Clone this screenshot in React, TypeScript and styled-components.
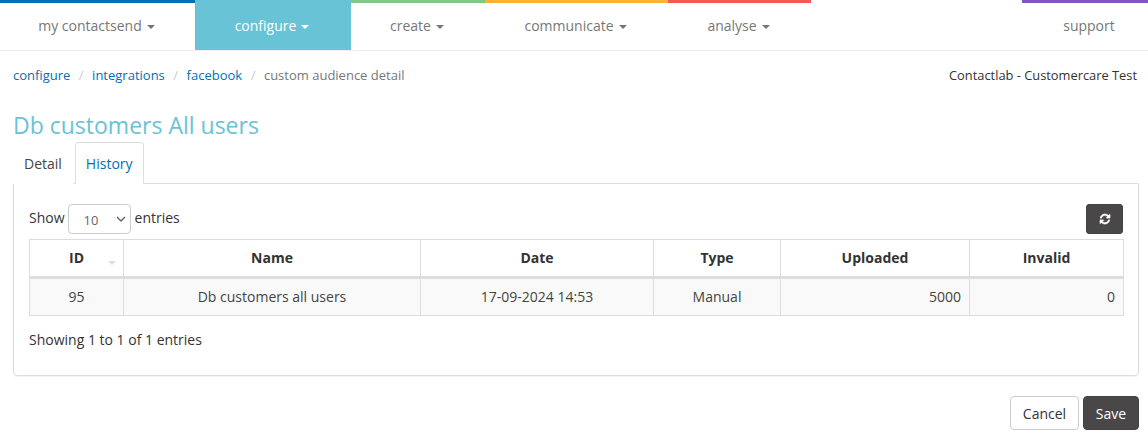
import React from 'react'
import styled, { createGlobalStyle } from 'styled-components'

const GlobalStyle = createGlobalStyle`
    html, body {
        margin: 0;
        padding: 0;
        background: #fff;
        font-family: "Open Sans", "Liberation Sans", sans-serif;
        font-size: 14px;
        color: #333;
    }
    * {
        box-sizing: border-box;
    }
`

const NavBar = styled.nav`
    display: flex;
    height: 51px;
    border-bottom: 1px solid #eee;
`

const NavItem = styled.a<{ $width: number; $accent?: string; $active?: boolean }>`
    flex: 0 0 ${(p) => p.$width}px;
    display: flex;
    align-items: center;
    justify-content: center;
    gap: 5px;
    height: 50px;
    padding: 0 2px 3px 0;
    border-top: 3px solid ${(p) => (p.$active ? '#69c3d6' : p.$accent || 'transparent')};
    background: ${(p) => (p.$active ? '#69c3d6' : 'transparent')};
    color: ${(p) => (p.$active ? '#fff' : '#777')};
    font-size: 14px;
`

const SupportItem = styled(NavItem)`
    padding-left: 10px;
`

const NavSpacer = styled.div`
    flex: 1;
`

const Caret = styled.span`
    width: 0;
    height: 0;
    margin-top: 3px;
    border-top: 4px solid currentColor;
    border-left: 4px solid transparent;
    border-right: 4px solid transparent;
`

const Content = styled.main`
    padding: 0 9px 0 13px;
`

const TopRow = styled.div`
    display: flex;
    justify-content: space-between;
    align-items: center;
    height: 48px;
    font-size: 13px;
    padding-right: 2px;
`

const Breadcrumb = styled.div`
    display: flex;
    gap: 8px;
    color: #777;
`

const Crumb = styled.a`
    color: #0070b9;
`

const Slash = styled.span`
    color: #ccc;
    padding: 0 0.5px;
`

const Account = styled.div`
    color: #333;
    font-size: 12.85px;
`

const Title = styled.h1`
    margin: 11px 0 0;
    height: 31px;
    line-height: 31px;
    font-size: 23px;
    font-weight: 400;
    color: #69c3d6;
`

const Tabs = styled.div`
    display: flex;
    margin-top: 1px;
    height: 42px;
`

const Tab = styled.a<{ $active?: boolean }>`
    display: flex;
    align-items: center;
    padding: 0 10px;
    margin-right: ${(p) => (p.$active ? '0' : '2px')};
    height: 42px;
    font-size: 14px;
    color: ${(p) => (p.$active ? '#0070b9' : '#444')};
    background: #fff;
    border: 1px solid ${(p) => (p.$active ? '#ddd' : 'transparent')};
    border-bottom-color: ${(p) => (p.$active ? '#fff' : 'transparent')};
    border-radius: 4px 4px 0 0;
    position: relative;
    z-index: 1;
`

const Panel = styled.section`
    margin-top: -1px;
    height: 193px;
    border: 1px solid #ddd;
    border-radius: 0 0 4px 4px;
    box-shadow: 0 1px 1px rgba(0, 0, 0, 0.05);
    padding: 20px 15px 0;
`

const TableTools = styled.div`
    display: flex;
    justify-content: space-between;
    align-items: center;
    height: 30px;
    margin-bottom: 5px;
`

const LengthLabel = styled.label`
    display: flex;
    align-items: flex-start;
    height: 30px;
    line-height: 28px;
    color: #333;
    font-size: 14px;
`

const LengthSelect = styled.select`
    width: 63px;
    height: 30px;
    margin: 0 4px 0 3px;
    padding: 1px 10px 0 15px;
    appearance: none;
    font-family: inherit;
    font-size: 13px;
    color: #666;
    background: #fff url("data:image/svg+xml,%3Csvg xmlns='http://www.w3.org/2000/svg' width='10' height='6'%3E%3Cpath d='M1 1l4 4 4-4' fill='none' stroke='%23666' stroke-width='1.4'/%3E%3C/svg%3E") no-repeat right 4px center;
    border: 1px solid #ccc;
    border-radius: 4px;
`

const DarkButton = styled.button`
    display: flex;
    align-items: center;
    justify-content: center;
    background: #4a4748;
    color: #fff;
    border: 1px solid #454243;
    border-radius: 3px;
    font-family: inherit;
`

const RefreshButton = styled(DarkButton)`
    width: 37px;
    height: 30px;
    padding: 0;
`

const DataTable = styled.table`
    width: 100%;
    table-layout: fixed;
    border-collapse: collapse;
    font-size: 14px;
`

const HeadCell = styled.th`
    position: relative;
    height: 38px;
    padding: 0 8px 2px;
    text-align: center;
    font-weight: 700;
    color: #333;
    border: 1px solid #ddd;
    border-bottom: 3px solid #ddd;
`

const SortMark = styled.span`
    position: absolute;
    right: 7px;
    top: 21px;
    width: 0;
    height: 0;
    border-top: 4px solid #ddd;
    border-left: 4px solid transparent;
    border-right: 4px solid transparent;
`

const BodyCell = styled.td<{ $align?: string }>`
    height: 38px;
    padding: 0 8px 1px;
    background: #f9f9f9;
    color: #444;
    text-align: ${(p) => p.$align || 'center'};
    border: 1px solid #ddd;
`

const TableInfo = styled.div`
    margin-top: 14px;
    line-height: 20px;
    color: #333;
`

const Footer = styled.div`
    display: flex;
    justify-content: flex-end;
    gap: 4px;
    margin-top: 20px;
`

const CancelButton = styled.button`
    width: 69px;
    height: 34px;
    padding: 0;
    background: #fff;
    color: #333;
    border: 1px solid #ccc;
    border-radius: 4px;
    font-family: inherit;
    font-size: 14px;
`

const SaveButton = styled(DarkButton)`
    width: 56px;
    height: 34px;
    padding: 0;
    border-radius: 4px;
    font-size: 14px;
`

const RefreshIcon = () => (
    <svg width="12" height="12" viewBox="0 0 1792 1792" fill="currentColor" stroke="currentColor" strokeWidth="50">
        <path d="M1639 1056q0 5-1 7-64 268-268 434.5t-478 166.5q-146 0-282.5-55t-243.5-157l-129 129q-19 19-45 19t-45-19-19-45v-448q0-26 19-45t45-19h448q26 0 45 19t19 45-19 45l-137 137q71 66 161 102t187 36q134 0 250-65t186-179q11-17 53-117 8-23 30-23h192q13 0 22.5 9.5t9.5 22.5zm25-800v448q0 26-19 45t-45 19h-448q-26 0-45-19t-19-45 19-45l138-138q-148-137-349-137-134 0-250 65t-186 179q-11 17-53 117-8 23-30 23h-199q-13 0-22.5-9.5t-9.5-22.5v-7q65-268 270-434.5t480-166.5q146 0 284 55.5t245 156.5l130-129q19-19 45-19t45 19 19 45z" />
    </svg>
)

const navItems = [
    { label: 'my contactsend', width: 195, accent: '#0070b9' },
    { label: 'configure', width: 156, accent: '#69c3d6', active: true },
    { label: 'create', width: 134, accent: '#82c785' },
    { label: 'communicate', width: 183, accent: '#fbb130' },
    { label: 'analyse', width: 143, accent: '#f55753' },
]

const columns = [94, 297, 233, 127, 189, 154]

function App() {
    return (
        <>
            <GlobalStyle />
            <NavBar>
                {navItems.map((item) => (
                    <NavItem key={item.label} $width={item.width} $accent={item.accent} $active={item.active}>
                        {item.label}
                        <Caret />
                    </NavItem>
                ))}
                <NavSpacer />
                <SupportItem $width={126} $accent="#7e57c2">support</SupportItem>
            </NavBar>

            <Content>
                <TopRow>
                    <Breadcrumb>
                        <Crumb>configure</Crumb>
                        <Slash>/</Slash>
                        <Crumb>integrations</Crumb>
                        <Slash>/</Slash>
                        <Crumb>facebook</Crumb>
                        <Slash>/</Slash>
                        <span>custom audience detail</span>
                    </Breadcrumb>
                    <Account>Contactlab - Customercare Test</Account>
                </TopRow>

                <Title>Db customers All users</Title>

                <Tabs>
                    <Tab>Detail</Tab>
                    <Tab $active>History</Tab>
                </Tabs>

                <Panel>
                    <TableTools>
                        <LengthLabel>
                            Show
                            <LengthSelect defaultValue="10">
                                <option value="10">10</option>
                                <option value="25">25</option>
                                <option value="50">50</option>
                            </LengthSelect>
                            entries
                        </LengthLabel>
                        <RefreshButton>
                            <RefreshIcon />
                        </RefreshButton>
                    </TableTools>

                    <DataTable>
                        <colgroup>
                            {columns.map((width, i) => (
                                <col key={i} width={width} />
                            ))}
                        </colgroup>
                        <thead>
                            <tr>
                                <HeadCell>
                                    ID
                                    <SortMark />
                                </HeadCell>
                                <HeadCell>Name</HeadCell>
                                <HeadCell>Date</HeadCell>
                                <HeadCell>Type</HeadCell>
                                <HeadCell>Uploaded</HeadCell>
                                <HeadCell>Invalid</HeadCell>
                            </tr>
                        </thead>
                        <tbody>
                            <tr>
                                <BodyCell>95</BodyCell>
                                <BodyCell>Db customers all users</BodyCell>
                                <BodyCell>17-09-2024 14:53</BodyCell>
                                <BodyCell>Manual</BodyCell>
                                <BodyCell $align="right">5000</BodyCell>
                                <BodyCell $align="right">0</BodyCell>
                            </tr>
                        </tbody>
                    </DataTable>

                    <TableInfo>Showing 1 to 1 of 1 entries</TableInfo>
                </Panel>

                <Footer>
                    <CancelButton>Cancel</CancelButton>
                    <SaveButton>Save</SaveButton>
                </Footer>
            </Content>
        </>
    )
}

export default App
